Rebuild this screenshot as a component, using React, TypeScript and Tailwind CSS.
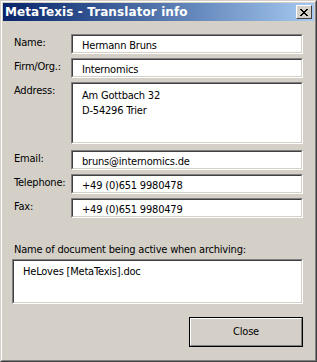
import React from "react";

function Sunken({ className, children }: { className: string; children?: React.ReactNode }) {
  return (
    <div className={`border border-t-[#808080] border-l-[#808080] border-b-white border-r-white ${className}`}>
      <div className="h-full border border-t-[#404040] border-l-[#404040] border-b-[#d4d0c8] border-r-[#d4d0c8] bg-white">
        {children}
      </div>
    </div>
  );
}

function Row({ label, value }: { label: string; value: string }) {
  return (
    <div className="flex">
      <div className="w-[57px] pt-[2px] leading-[13px]">{label}</div>
      <Sunken className="w-[232px] h-[20px]">
        <div className="pl-[9px] pt-[3px] leading-[13px]">{value}</div>
      </Sunken>
    </div>
  );
}

export default function App() {
  return (
    <div className="w-[317px] h-[362px] font-['Tahoma','DejaVu_Sans_Condensed','DejaVu_Sans',sans-serif] text-[11px] tracking-[-0.2px] text-black">
      <div className="h-full border border-t-[#d4d0c8] border-l-[#d4d0c8] border-b-[#404040] border-r-[#404040]">
        <div className="h-full border border-t-white border-l-white border-b-[#808080] border-r-[#808080] bg-[#d4d0c8] p-px flex flex-col">
          <div className="h-[18px] flex items-center justify-between bg-gradient-to-r from-[#0a246a] to-[#a6caf0] pl-[2px] pr-[2px]">
            <span className="text-white font-bold font-['DejaVu_Sans',sans-serif] text-[12px] tracking-[0.1px] leading-[14px]">MetaTexis - Translator info</span>
            <div className="w-[16px] h-[14px] border border-t-white border-l-white border-b-[#404040] border-r-[#404040] bg-[#d4d0c8] flex items-center justify-center">
              <svg width="8" height="7" viewBox="0 0 8 7" shapeRendering="crispEdges">
                <path d="M0 0h2v1h-2zM6 0h2v1h-2zM1 1h2v1h-2zM5 1h2v1h-2zM2 2h4v1h-4zM3 3h2v1h-2zM2 4h4v1h-4zM1 5h2v1h-2zM5 5h2v1h-2zM0 6h2v1h-2zM6 6h2v1h-2z" fill="#000" />
              </svg>
            </div>
          </div>
          <div className="flex flex-col pl-[11px] pr-[11px] pt-[13px]">
            <div className="flex flex-col gap-[4px]">
              <Row label="Name:" value="Hermann Bruns" />
              <Row label="Firm/Org.:" value="Internomics" />
              <div className="flex">
                <div className="w-[57px] pt-[2px] leading-[13px]">Address:</div>
                <Sunken className="w-[232px] h-[62px]">
                  <div className="pl-[9px] pt-[4px] leading-[15px]">
                    <div>Am Gottbach 32</div>
                    <div>D-54296 Trier</div>
                  </div>
                </Sunken>
              </div>
            </div>
            <div className="flex flex-col gap-[4px] mt-[6px]">
              <Row label="Email:" value="bruns@internomics.de" />
              <Row label="Telephone:" value="+49 (0)651 9980478" />
              <Row label="Fax:" value="+49 (0)651 9980479" />
            </div>
            <div className="mt-[25px] leading-[13px]">Name of document being active when archiving:</div>
            <Sunken className="ml-[-2px] mt-[3px] w-[291px] h-[45px]">
              <div className="pl-[9px] pt-[4px] leading-[13px]">HeLoves [MetaTexis].doc</div>
            </Sunken>
            <div className="flex justify-end mt-[13px]">
              <div className="w-[114px] h-[30px] border border-black">
                <div className="h-full border border-t-white border-l-white border-b-[#808080] border-r-[#808080] flex items-center justify-center">
                  Close
                </div>
              </div>
            </div>
          </div>
        </div>
      </div>
    </div>
  );
}
